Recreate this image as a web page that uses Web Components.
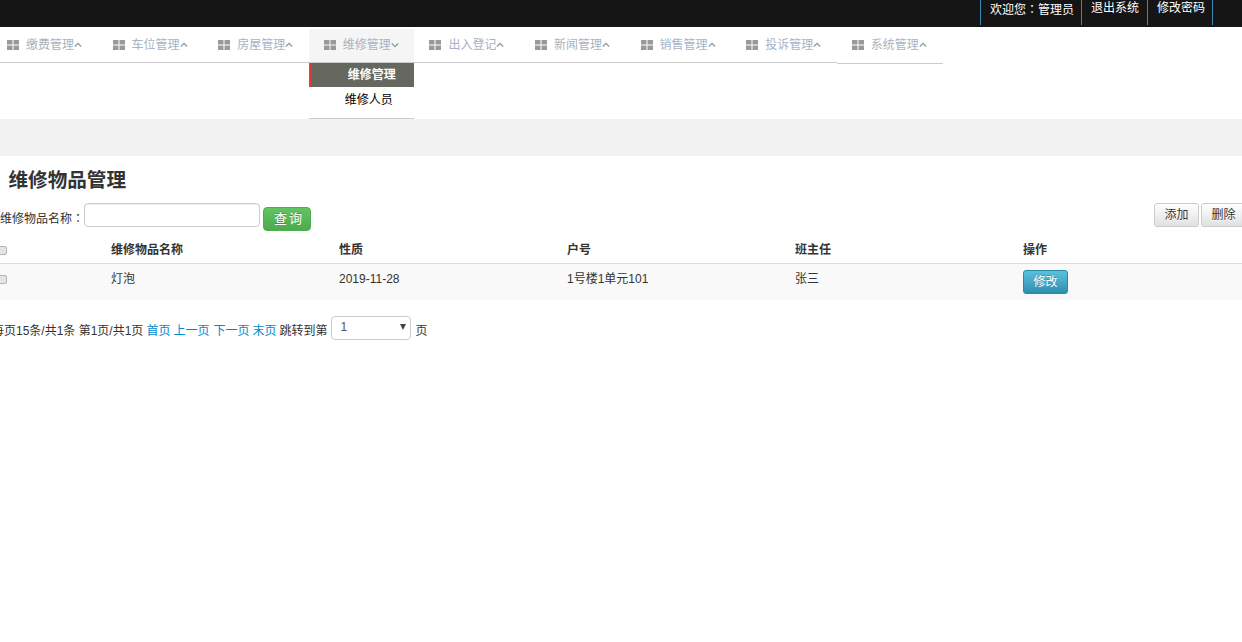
<!DOCTYPE html>
<html lang="zh">
<head>
<meta charset="utf-8">
<title>维修物品管理</title>
<style>
  html, body { margin: 0; background: #fff; overflow: hidden; }
  body { font: 12px/18px "Liberation Sans", "Noto Sans CJK SC", sans-serif; color: #333; }
  .colon { font-family: "Noto Sans CJK JP", sans-serif; }
</style>
</head>
<body>
<top-bar>
  <top-link>欢迎您<span class="colon" lang="ja">：</span>管理员</top-link>
  <top-link style="padding-right:8px">退出系统</top-link>
  <top-link>修改密码</top-link>
</top-bar>

<main-nav>
  <nav-item>缴费管理</nav-item>
  <nav-item>车位管理</nav-item>
  <nav-item>房屋管理</nav-item>
  <nav-item open>维修管理
    <sub-item slot="menu" active>维修管理</sub-item>
    <sub-item slot="menu">维修人员</sub-item>
  </nav-item>
  <nav-item>出入登记</nav-item>
  <nav-item>新闻管理</nav-item>
  <nav-item>销售管理</nav-item>
  <nav-item>投诉管理</nav-item>
  <nav-item low>系统管理</nav-item>
</main-nav>

<grey-band></grey-band>

<page-title>维修物品管理</page-title>

<search-bar label="维修物品名称">
  <ui-button slot="action">添加</ui-button>
  <ui-button slot="action">删除</ui-button>
</search-bar>

<data-table>
  <table-row head>
    <span slot="c1">维修物品名称</span><span slot="c2">性质</span><span slot="c3">户号</span><span slot="c4">班主任</span><span slot="c5">操作</span>
  </table-row>
  <table-row>
    <span slot="c1">灯泡</span><span slot="c2">2019-11-28</span><span slot="c3">1号楼1单元101</span><span slot="c4">张三</span>
    <ui-button slot="c5" kind="info">修改</ui-button>
  </table-row>
</data-table>

<pager-bar></pager-bar>

<script>
function define(name, html, init) {
  customElements.define(name, class extends HTMLElement {
    constructor() {
      super();
      const root = this.attachShadow({ mode: 'open' });
      root.innerHTML = html;
      if (init) init(this, root);
    }
  });
}

define('top-bar', `
  <style>
    :host { display: flex; justify-content: flex-end; height: 27px; padding-right: 29px; background: #151515; box-sizing: border-box; }
    div { display: flex; height: 25px; border-right: 1px solid #3a87ad; }
  </style>
  <div><slot></slot></div>
`);

define('top-link', `
  <style>
    :host { display: block; padding: 1px 7px 0 9px; border-left: 1px solid #3a87ad; color: #fff; line-height: 15px; }
  </style>
  <slot></slot>
`);

define('main-nav', `
  <style>
    :host { display: flex; margin-left: -8px; padding-top: 2px; height: 90px; align-items: flex-start; }
  </style>
  <slot></slot>
`);

define('nav-item', `
  <style>
    :host { display: block; width: 105.6px; flex: none; color: #a9b2c3; }
    .link { display: flex; align-items: center; box-sizing: content-box; height: 32px; padding: 0 0 1px 15px; border-bottom: 1px solid #ccc; white-space: nowrap; }
    .link svg.g { margin-right: 7px; flex: none; }
    .link svg.c { flex: none; }
    :host([open]) .link { background: #f5f5f5; }
    :host([low]) { width: 106px; }
    :host([low]) .link { padding-bottom: 2px; }
    .menu { display: none; height: 55px; border-bottom: 1px solid #ccc; }
    :host([open]) .menu { display: block; }
  </style>
  <div class="link">
    <svg class="g" width="12" height="10" viewBox="0 0 12 10"><path fill="#999" d="M0 0h5.5v4.5H0zM6.5 0H12v4.5H6.5zM0 5.5h5.5V10H0zM6.5 5.5H12V10H6.5z"/></svg>
    <slot></slot>
    <svg class="c" width="8" height="6" viewBox="0 0 8 6"><path fill="none" stroke="#99a" stroke-width="1.3" d="M.8 4.5 4 1.5l3.2 3"/></svg>
  </div>
  <div class="menu"><slot name="menu"></slot></div>
`, (el, root) => {
  if (el.hasAttribute('open')) root.querySelector('.c path').setAttribute('d', 'M.8 1.5 4 4.5l3.2-3');
});

define('sub-item', `
  <style>
    :host { display: block; box-sizing: border-box; height: 31px; padding: 0 0 0 36px; line-height: 27px; color: #000; }
    :host([active]) { height: 24px; padding-left: 39px; line-height: 24px; background: #666860; color: #fff; font-weight: bold; box-shadow: inset 2px 0 0 #e03c3c; }
  </style>
  <slot></slot>
`);

define('grey-band', `
  <style>:host { display: block; height: 37px; background: #f2f2f2; }</style>
`);

define('page-title', `
  <style>
    :host { display: block; margin: 13px 0 0 8.5px; font-size: 19.6px; line-height: 22px; font-weight: bold; color: #333; }
  </style>
  <slot></slot>
`);

define('search-bar', `
  <style>
    :host { display: flex; align-items: flex-start; height: 34px; margin-top: 12px; }
    label { margin: 6px 0 0 0; white-space: nowrap; }
    label span { font-family: "Noto Sans CJK JP", sans-serif; }
    input { box-sizing: border-box; width: 176px; height: 24px; margin: 0; padding: 2px 6px; border: 1px solid #ccc; border-radius: 4px; outline: 0; box-shadow: inset 0 1px 1px rgba(0,0,0,.075); }
    button { box-sizing: border-box; width: 48px; height: 24px; margin: 4px 0 0 3px; padding: 0 0 0 4px; border: 1px solid #4cae4c; border-radius: 4px; color: #fff; font: inherit; font-size: 13px; letter-spacing: 2px; text-shadow: 0 -1px 0 rgba(0,0,0,.2); background: linear-gradient(#62c462, #4cab4c); }
    .right { display: flex; gap: 2px; margin-left: auto; margin-right: -4px; }
  </style>
  <label></label><input type="text"><button>查询</button>
  <div class="right"><slot name="action"></slot></div>
`, (el, root) => {
  const label = root.querySelector('label');
  label.textContent = el.getAttribute('label');
  const colon = document.createElement('span');
  colon.lang = 'ja';
  colon.textContent = '：';
  label.append(colon);
});

define('ui-button', `
  <style>
    :host { display: inline-block; box-sizing: border-box; width: 45px; height: 24px; line-height: 23px; text-align: center; border: 1px solid #ccc; border-radius: 3px; color: #333; background: linear-gradient(#fff, #e0e0e0); text-shadow: 0 1px 0 #fff; }
    :host([kind="info"]) { border-color: #2b88a8; color: #fff; background: linear-gradient(#5bc0de, #2f90ae); text-shadow: 0 -1px 0 rgba(0,0,0,.2); }
  </style>
  <slot></slot>
`);

define('data-table', `
  <style>:host { display: block; margin-top: -1px; }</style>
  <slot></slot>
`);

define('table-row', `
  <style>
    :host { display: grid; grid-template-columns: 111px repeat(4, 228px) 1fr; height: 36px; background: #f9f9f9; }
    :host([head]) { height: 28px; background: #fff; border-bottom: 1px solid #ddd; box-sizing: border-box; font-weight: bold; }
    div { padding-top: 6px; }
    :host([head]) div { padding-top: 5px; }
    .box { position: relative; }
    i { position: absolute; left: -6px; top: 11px; width: 13px; height: 9px; border: 1px solid #b5b5b5; border-radius: 2px; background: #e4e4e4; box-sizing: border-box; }
    :host([head]) i { top: 10px; }
  </style>
  <div class="box"><i></i></div>
  <div><slot name="c1"></slot></div>
  <div><slot name="c2"></slot></div>
  <div><slot name="c3"></slot></div>
  <div><slot name="c4"></slot></div>
  <div><slot name="c5"></slot></div>
`);

define('pager-bar', `
  <style>
    :host { display: flex; align-items: flex-start; height: 24px; margin: 16px 0 0 -8px; white-space: nowrap; }
    span, a { margin-top: 6px; }
    a { color: #0088cc; text-decoration: none; margin-left: 3px; }
    a.wide { margin-left: 4px; }
    .sel { position: relative; box-sizing: border-box; width: 80px; height: 24px; margin: 0 4px 0 4px; padding: 0 8px; border: 1px solid #ccc; border-radius: 4px; line-height: 20px; color: #555; }
    .sel::after { content: ""; position: absolute; right: 4px; top: 7px; border: 3.5px solid transparent; border-top: 6px solid #444; border-bottom: 0; }
  </style>
  <span>每页15条/共1条 第1页/共1页</span>
  <a href="#">首页</a><a href="#">上一页</a><a class="wide" href="#">下一页</a><a href="#">末页</a>
  <span style="margin-left:3px">跳转到第</span>
  <span class="sel">1</span>
  <span>页</span>
`);
</script>
</body>
</html>
